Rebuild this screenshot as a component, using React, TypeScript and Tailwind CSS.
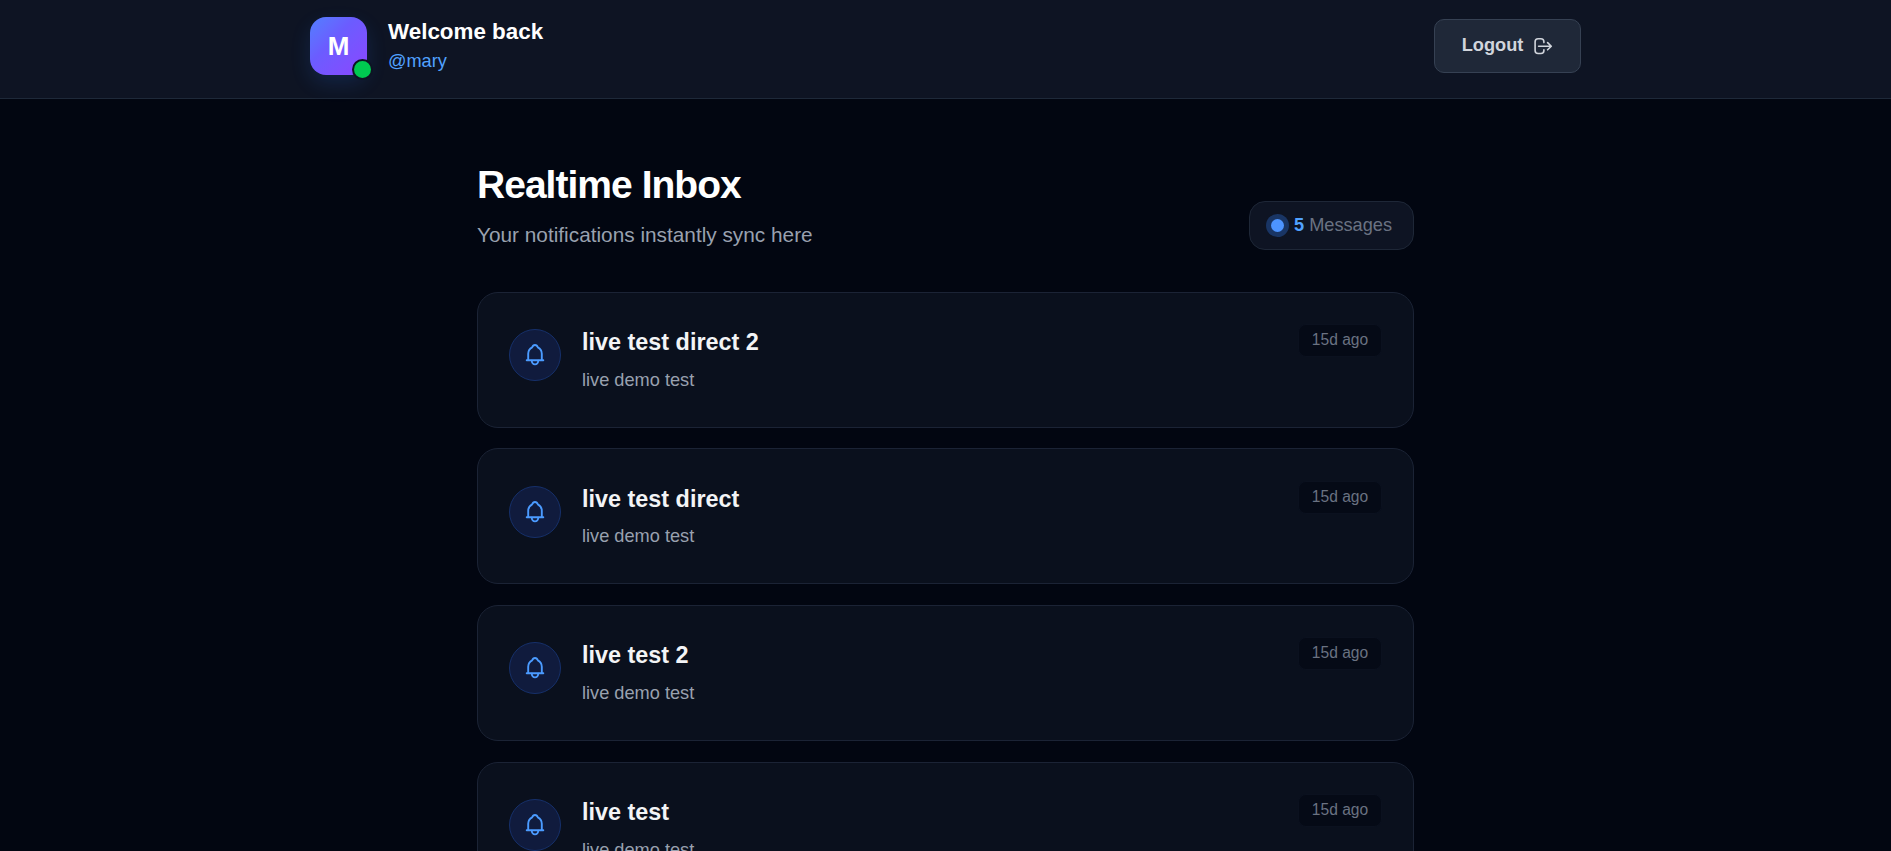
const messages = [
  { id: 5, title: "live test direct 2", body: "live demo test", time: "15d ago" },
  { id: 4, title: "live test direct", body: "live demo test", time: "15d ago" },
  { id: 3, title: "live test 2", body: "live demo test", time: "15d ago" },
  { id: 2, title: "live test", body: "live demo test", time: "15d ago" },
];

function LogoutIcon() {
  return (
    <svg
      className="size-5"
      viewBox="0 0 20 20"
      fill="none"
      stroke="currentColor"
      strokeWidth="1.6"
      strokeLinecap="round"
      strokeLinejoin="round"
    >
      <path d="M10.9 6.6V5.8a3 3 0 0 0-3-3H5.1a3 3 0 0 0-3 3v8.7a3 3 0 0 0 3 3h2.8a3 3 0 0 0 3-3v-.7" />
      <path d="M5.6 10.2h12.6M14.6 6.6l3.7 3.6-3.7 3.6" />
    </svg>
  );
}

function BellIcon() {
  return (
    <svg
      className="size-[26px]"
      viewBox="0 0 26 26"
      fill="none"
      stroke="currentColor"
      strokeWidth="1.9"
      strokeLinecap="round"
      strokeLinejoin="round"
    >
      <path d="M4.7 18.3h16.6" />
      <path d="M6.2 18v-6.2c0-3 1.3-5.2 4-6.5.5-1.5 1.4-2.3 2.8-2.3s2.3.8 2.8 2.3c2.7 1.3 4 3.5 4 6.5V18" />
      <path d="M9.8 18.8a3.2 3.6 0 0 0 6.4 0" />
    </svg>
  );
}

function Header() {
  return (
    <header className="h-[99px] border-b border-[#1e2939] bg-[#0e1423]">
      <div className="mx-auto flex w-[1271px] items-start justify-between">
        <div className="flex pt-[17px]">
          <div className="relative flex h-[58px] w-[57px] items-center justify-center rounded-[16px] bg-linear-to-br from-[#4f7fff] via-[#6b5cff] via-40% to-[#8a45ff] text-[26px] font-bold text-white shadow-[0_8px_20px_rgba(43,127,255,0.16)]">
            M
            {/* online dot */}
            <span className="absolute -right-[6px] -bottom-[5px] size-[21px] rounded-full border-2 border-[#0e1423] bg-[#00c950]" />
          </div>
          <div className="ml-[21px]">
            <h2 className="text-[22.4px] leading-[30px] font-bold text-white">Welcome back</h2>
            <p className="text-[18.2px] leading-[28px] text-[#51a2ff]">@mary</p>
          </div>
        </div>

        <button className="mt-[19px] flex h-[54px] w-[147px] items-center justify-center gap-[10px] rounded-[10px] border border-[#364153] bg-[#1f2838] text-[18.2px] font-bold text-[#d1d5dc]">
          Logout
          <LogoutIcon />
        </button>
      </div>
    </header>
  );
}

function MessageCard({ title, body, time }: { title: string; body: string; time: string }) {
  return (
    <div className="flex h-[135.85px] shrink-0 items-start rounded-[21px] border border-[#1b2335] bg-[#0a101d] px-[31px]">
      <div className="mt-[36.4px] flex size-[52px] items-center justify-center rounded-full border border-[#16306a] bg-[#101b3d] text-[#4b9bff]">
        <BellIcon />
      </div>
      <div className="ml-[21px] flex-1 pt-[34.4px]">
        <h3 className="text-[23.4px] leading-[31px] font-bold text-[#f3f4f6]">{title}</h3>
        <p className="mt-[8.6px] text-[18.2px] leading-[27px] text-[#99a1af]">{body}</p>
      </div>
      <span className="mt-[31.4px] flex h-[33px] w-[84px] items-center justify-center rounded-[8px] border border-[#0b111f] bg-[#050a16] pb-[2px] text-[15.6px] text-[#6a7282]">
        {time}
      </span>
    </div>
  );
}

export default function App() {
  return (
    <div className="h-[851px] overflow-hidden bg-[#020611] font-['Liberation_Sans',Arial,sans-serif]">
      <Header />

      <main className="mx-auto w-[937px] pt-[62px]">
        <div className="flex items-end justify-between">
          <div>
            <h1 className="text-[39px] leading-[47px] font-bold tracking-[-0.025em] text-white">Realtime Inbox</h1>
            <p className="mt-[11px] text-[20.8px] leading-[31px] text-[#99a1af]">
              Your notifications instantly sync here
            </p>
          </div>

          <div className="flex h-[49px] w-[165px] items-center rounded-[16px] border border-[#1e2737] bg-[#0e1423] pl-[21px] text-[18.2px] text-[#6a7282]">
            <span className="mr-[10px] size-[13px] rounded-full bg-[#4d94ff] ring-[5px] ring-[#193564]" />
            <span className="mr-[5px] font-bold text-[#51a2ff]">5</span>
            Messages
          </div>
        </div>

        <div className="mt-[41.75px] flex flex-col gap-[20.8px]">
          {messages.map((m) => (
            <MessageCard key={m.id} title={m.title} body={m.body} time={m.time} />
          ))}
        </div>
      </main>
    </div>
  );
}
